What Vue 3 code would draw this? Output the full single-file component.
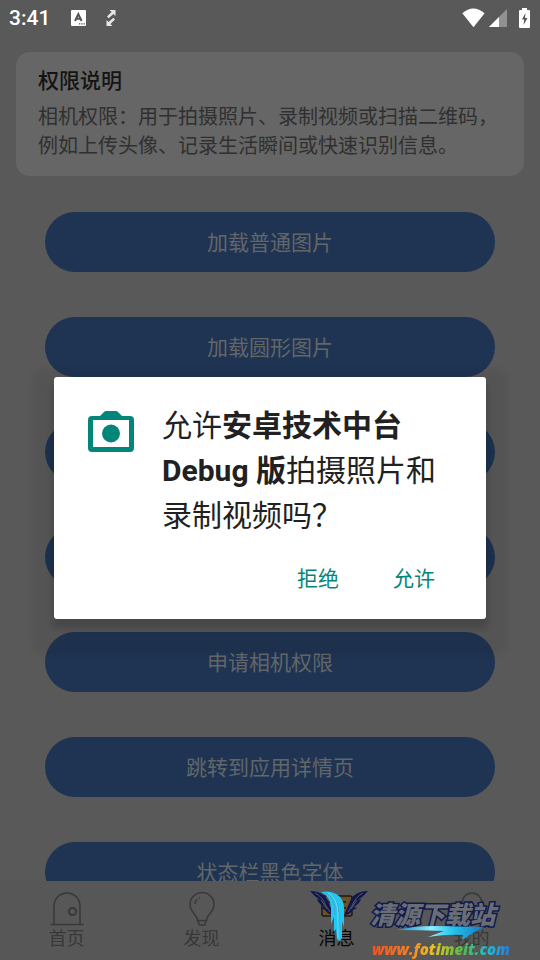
<script setup>
const actions = [
  '加载普通图片',
  '加载圆形图片',
  '加载圆角图片',
  '申请存储权限',
  '申请相机权限',
  '跳转到应用详情页',
  '状态栏黑色字体',
]
</script>

<template>
  <div class="screen">
    <header class="status">
      <time class="clock">3:41</time>
      <svg class="st-a" viewBox="0 0 15 16" aria-hidden="true">
        <rect width="15" height="16" rx="1" fill="#fff" />
        <path d="M4 11 7.300 4 10.600 11M5.200 8.800H9.400" fill="none" stroke="#555" stroke-width="2" />
        <path d="M8 13.800h1.300M10.300 13.800h1.300M12.600 13.800h1.300" stroke="#555" stroke-width="1.200" />
      </svg>
      <svg class="st-arrows" viewBox="0 0 10 18" aria-hidden="true">
        <path d="M3.500 1H9.500V7L7.400 5 2.700 9.200 1 7.500 5.600 3.100zM6.500 17H.5V11l2.100 2 4.700-4.200L9 10.500 4.400 14.900z" fill="#e6e6e6" />
      </svg>
      <span class="grow"></span>
      <svg class="st-wifi" viewBox="0 0 23 20" aria-hidden="true">
        <path d="M.3 5.300Q11.300-4.300 22.600 5.300L11.500 19.300z" fill="#fff" />
      </svg>
      <svg class="st-signal" viewBox="0 0 18 18" aria-hidden="true">
        <path d="M18 0V18H0z" fill="#919191" />
        <path d="M10 8V18H0z" fill="#fff" />
      </svg>
      <svg class="st-battery" viewBox="0 0 11 20" aria-hidden="true">
        <path d="M3 0h5v2h2q1 0 1 1v16q0 1-1 1H1q-1 0-1-1V3q0-1 1-1h2z" fill="#fff" />
        <path d="M6.500 5 3 11.500h2.200L4.500 17 8.500 10H6z" fill="#555" />
      </svg>
    </header>

    <section class="notice">
      <h2>权限说明</h2>
      <p>相机权限：用于拍摄照片、录制视频或扫描二维码，例如上传头像、记录生活瞬间或快速识别信息。</p>
    </section>

    <main class="actions">
      <button v-for="label in actions" :key="label" type="button" class="action">{{ label }}</button>
    </main>

    <nav class="tabs">
      <a href="#home" class="tab">
        <svg viewBox="0 0 34 34" aria-hidden="true">
          <path d="M.5 32.500H33.500M4 32V14a13 13 0 0 1 26 0V32" />
          <circle cx="22.500" cy="19.500" r="3.500" stroke-width="2" />
        </svg>
        <span>首页</span>
      </a>
      <a href="#discover" class="tab">
        <svg viewBox="0 0 34 34" aria-hidden="true">
          <path d="M12.500 28.500c0-6-7.500-8-7.500-16a12 12 0 0 1 24 0c0 8-7.500 10-7.500 16zM13 29l1.500 4h5l1.500-4M10 12q0-3 2-4.500M14 6.300l1-.5" />
        </svg>
        <span>发现</span>
      </a>
      <a href="#messages" class="tab active">
        <svg viewBox="0 0 34 34" aria-hidden="true">
          <rect x="2" y="4" width="30" height="20" rx="2" fill="#6b5226" stroke="#1e1a12" />
          <path d="M8 10h18M8 16h18" stroke="#1e1a12" />
        </svg>
        <span>消息</span>
      </a>
      <a href="#me" class="tab">
        <svg viewBox="0 0 34 34" aria-hidden="true">
          <circle cx="17" cy="11" r="10" />
          <path d="M3 33q1-11 14-11t14 11" />
        </svg>
        <span>我的</span>
      </a>
    </nav>

    <div class="watermark">
      <svg class="emblem" viewBox="0 0 60 52" aria-hidden="true">
        <path d="M0 0Q12 0 17 8L24 24Q18 24 15 19L11 17 14 16Q8 12 7 8L10 9Q4 5 0 0zM58 0Q46 0 41 8L34 24Q40 24 43 19L47 17 44 16Q50 12 51 8L48 9Q54 5 58 0z" fill="#11164f" />
        <path d="M5 2Q13 6 16 15L20 21M53 2Q45 6 42 15L38 21M11 9 17 18M47 9 41 18" fill="none" stroke="#555b66" />
        <path d="M11 1Q22-1 29 5Q35 10 34 22V36L32 30V47Q30 52 27 48L26 38 24 41V26L21 33V18Q21 6 11 1z" fill="#22c8f2" />
        <path d="M15 2Q26 5 25 24M21 3Q31 9 29 38" fill="none" stroke="#4f9fc0" />
        <path d="M18 2Q28 6 28 25V47" fill="none" stroke="#5fe0ff" />
      </svg>
      <div class="brand">
        <strong>清源下载站</strong>
        <svg class="swoosh" viewBox="0 0 90 16" aria-hidden="true">
          <defs>
            <linearGradient id="swoosh-fill">
              <stop offset="0" stop-color="#187fc0" />
              <stop offset=".4" stop-color="#8cf0ff" />
              <stop offset=".65" stop-color="#22c3ec" />
              <stop offset="1" stop-color="#1876bd" />
            </linearGradient>
          </defs>
          <path d="M0 5Q18 1 38 1L88 2Q80 6 66 15L67 10Q52 9 32 12L48 6Q24 5 0 5z" fill="url(#swoosh-fill)" />
        </svg>
        <span class="site">www.fotimeit.com</span>
      </div>
    </div>

    <div class="overlay">
      <section class="dialog" role="dialog" aria-labelledby="permission-title">
        <div class="ask">
          <svg class="camera" viewBox="0 0 46 42" aria-hidden="true">
            <path fill-rule="evenodd" d="M4 5H12L16 1Q17 0 18 0H28Q29 0 30 1L34 5H42Q46 5 46 9V37Q46 41 42 41H4Q0 41 0 37V9Q0 5 4 5zM5 9V36H41V9z" fill="#04857a" />
            <circle cx="23" cy="22.500" r="9" fill="#04857a" />
          </svg>
          <h1 id="permission-title">允许<b>安卓技术中台 Debug 版</b>拍摄照片和录制视频吗？</h1>
        </div>
        <div class="choices">
          <button type="button">拒绝</button>
          <button type="button">允许</button>
        </div>
      </section>
    </div>
  </div>
</template>

<style>
body {
  margin: 0;
  background: #595959;
}
</style>

<style scoped>
.screen {
  position: relative;
  display: flex;
  flex-direction: column;
  height: 100vh;
  overflow: hidden;
  background: #595959;
  font-family: Roboto, "Noto Sans CJK SC", sans-serif;
}
.status {
  display: flex;
  align-items: center;
  flex: none;
  height: 36px;
  padding: 0 10px 0 9px;
}
.clock {
  color: #fff;
  font-size: 21px;
  font-weight: 500;
  line-height: 36px;
}
.st-a {
  width: 15px;
  height: 16px;
  margin-left: 21px;
}
.st-arrows {
  width: 10px;
  height: 18px;
  margin-left: 20px;
}
.grow {
  flex: 1;
}
.st-wifi {
  width: 23px;
  height: 20px;
}
.st-signal {
  width: 18px;
  height: 18px;
  margin: 0 12px 0 4px;
}
.st-battery {
  width: 11px;
  height: 20px;
}
.notice {
  flex: none;
  margin: 16px 16px 0;
  padding: 13px 22px 15px;
  border-radius: 14px;
  background: #666;
}
.notice h2 {
  margin: 0;
  color: #141414;
  font-size: 21px;
  font-weight: 500;
  line-height: 32px;
}
.notice p {
  margin: 6px 0 0;
  color: #303030;
  font-size: 20px;
  line-height: 29px;
}
.actions {
  display: flex;
  flex: 1;
  flex-direction: column;
  gap: 45px;
  min-height: 0;
  overflow: hidden;
  padding: 36px 45px 0;
}
.action {
  flex: none;
  height: 60px;
  padding: 0 0 2px;
  border: 0;
  border-radius: 30px;
  background: #1f3452;
  color: #626669;
  font-family: inherit;
  font-size: 21px;
}
.tabs {
  display: flex;
  flex: none;
  height: 79px;
  background: #575757;
}
.tab {
  display: flex;
  flex: 1;
  flex-direction: column;
  align-items: center;
  padding: 11px 2px 0 0;
  color: #383838;
  font-size: 18px;
  line-height: 26px;
  text-decoration: none;
}
.tab svg {
  width: 34px;
  height: 34px;
  fill: none;
  stroke: #383838;
  stroke-width: 1.5;
}
.tab.active {
  color: #050505;
}
.watermark {
  position: absolute;
  right: 30px;
  bottom: 0;
  display: flex;
  align-items: flex-start;
}
.emblem {
  width: 60px;
  height: 52px;
}
.brand {
  position: relative;
  display: flex;
  flex-direction: column;
  width: 140px;
  padding-top: 9px;
}
.brand strong {
  color: #6a6d73;
  font-size: 25px;
  font-style: italic;
  font-weight: 900;
  line-height: 32px;
  paint-order: stroke fill;
  -webkit-text-stroke: 3px #111a4e;
}
.swoosh {
  position: absolute;
  top: 34px;
  left: 26px;
  width: 90px;
  height: 16px;
}
.site {
  align-self: flex-end;
  margin-top: 6px;
  background: linear-gradient(90deg, #f4511e, #f57c20 25%, #e8c522 45%, #50bf45 65%, #22b8d8 85%, #2878d8);
  background-clip: text;
  color: transparent;
  font-family: "Open Sans", sans-serif;
  font-size: 15px;
  font-style: italic;
  font-weight: 800;
  line-height: 22px;
}
.overlay {
  position: absolute;
  inset: 36px 0 0;
  display: flex;
  align-items: center;
  justify-content: center;
  padding: 0 54px;
}
.dialog {
  flex: 1;
  border-radius: 3px;
  background: #fff;
  box-shadow: 0 8px 6px 2px rgba(0, 0, 0, 0.14), 0 14px 6px 22px rgba(0, 0, 0, 0.05);
}
.ask {
  display: flex;
  align-items: flex-start;
  gap: 28px;
  padding: 26px 34px 0;
}
.camera {
  flex: none;
  width: 46px;
  height: 42px;
  margin-top: 8px;
}
.ask h1 {
  margin: 0;
  color: #212121;
  font-size: 30px;
  font-weight: 400;
  line-height: 45px;
}
.ask b {
  font-weight: 700;
}
.choices {
  display: flex;
  justify-content: flex-end;
  gap: 30px;
  padding: 10px 39px 14px;
}
.choices button {
  height: 57px;
  padding: 0 12px;
  border: 0;
  background: none;
  color: #04857a;
  font-family: inherit;
  font-size: 21px;
}
</style>
